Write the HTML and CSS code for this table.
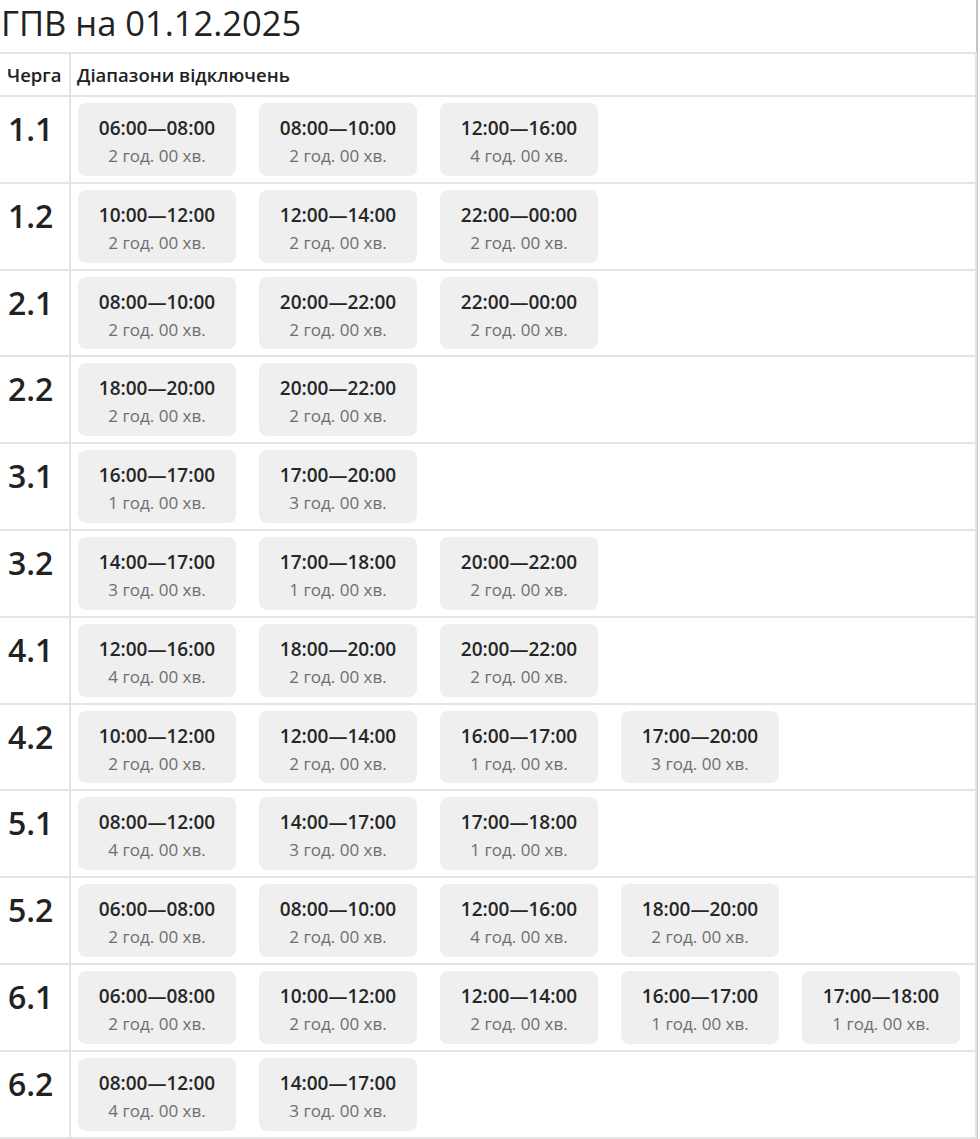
FILE: index.html
```html
<!DOCTYPE html>
<html lang="uk">
<head>
<meta charset="utf-8">
<title>ГПВ на 01.12.2025</title>
<link rel="stylesheet" href="styles.css">
</head>
<body>
<div class="page">
  <h2 class="title">ГПВ на 01.12.2025</h2>
  <table class="sched">
    <thead>
      <tr><th class="q">Черга</th><th class="r">Діапазони відключень</th></tr>
    </thead>
    <tbody>
      <tr><td class="q">1.1</td><td class="r"><div class="chips">
        <div class="chip"><div class="t">06:00—08:00</div><div class="d">2 год. 00 хв.</div></div>
        <div class="chip"><div class="t">08:00—10:00</div><div class="d">2 год. 00 хв.</div></div>
        <div class="chip"><div class="t">12:00—16:00</div><div class="d">4 год. 00 хв.</div></div>
      </div></td></tr>
      <tr><td class="q">1.2</td><td class="r"><div class="chips">
        <div class="chip"><div class="t">10:00—12:00</div><div class="d">2 год. 00 хв.</div></div>
        <div class="chip"><div class="t">12:00—14:00</div><div class="d">2 год. 00 хв.</div></div>
        <div class="chip"><div class="t">22:00—00:00</div><div class="d">2 год. 00 хв.</div></div>
      </div></td></tr>
      <tr><td class="q">2.1</td><td class="r"><div class="chips">
        <div class="chip"><div class="t">08:00—10:00</div><div class="d">2 год. 00 хв.</div></div>
        <div class="chip"><div class="t">20:00—22:00</div><div class="d">2 год. 00 хв.</div></div>
        <div class="chip"><div class="t">22:00—00:00</div><div class="d">2 год. 00 хв.</div></div>
      </div></td></tr>
      <tr><td class="q">2.2</td><td class="r"><div class="chips">
        <div class="chip"><div class="t">18:00—20:00</div><div class="d">2 год. 00 хв.</div></div>
        <div class="chip"><div class="t">20:00—22:00</div><div class="d">2 год. 00 хв.</div></div>
      </div></td></tr>
      <tr><td class="q">3.1</td><td class="r"><div class="chips">
        <div class="chip"><div class="t">16:00—17:00</div><div class="d">1 год. 00 хв.</div></div>
        <div class="chip"><div class="t">17:00—20:00</div><div class="d">3 год. 00 хв.</div></div>
      </div></td></tr>
      <tr><td class="q">3.2</td><td class="r"><div class="chips">
        <div class="chip"><div class="t">14:00—17:00</div><div class="d">3 год. 00 хв.</div></div>
        <div class="chip"><div class="t">17:00—18:00</div><div class="d">1 год. 00 хв.</div></div>
        <div class="chip"><div class="t">20:00—22:00</div><div class="d">2 год. 00 хв.</div></div>
      </div></td></tr>
      <tr><td class="q">4.1</td><td class="r"><div class="chips">
        <div class="chip"><div class="t">12:00—16:00</div><div class="d">4 год. 00 хв.</div></div>
        <div class="chip"><div class="t">18:00—20:00</div><div class="d">2 год. 00 хв.</div></div>
        <div class="chip"><div class="t">20:00—22:00</div><div class="d">2 год. 00 хв.</div></div>
      </div></td></tr>
      <tr><td class="q">4.2</td><td class="r"><div class="chips">
        <div class="chip"><div class="t">10:00—12:00</div><div class="d">2 год. 00 хв.</div></div>
        <div class="chip"><div class="t">12:00—14:00</div><div class="d">2 год. 00 хв.</div></div>
        <div class="chip"><div class="t">16:00—17:00</div><div class="d">1 год. 00 хв.</div></div>
        <div class="chip"><div class="t">17:00—20:00</div><div class="d">3 год. 00 хв.</div></div>
      </div></td></tr>
      <tr><td class="q">5.1</td><td class="r"><div class="chips">
        <div class="chip"><div class="t">08:00—12:00</div><div class="d">4 год. 00 хв.</div></div>
        <div class="chip"><div class="t">14:00—17:00</div><div class="d">3 год. 00 хв.</div></div>
        <div class="chip"><div class="t">17:00—18:00</div><div class="d">1 год. 00 хв.</div></div>
      </div></td></tr>
      <tr><td class="q">5.2</td><td class="r"><div class="chips">
        <div class="chip"><div class="t">06:00—08:00</div><div class="d">2 год. 00 хв.</div></div>
        <div class="chip"><div class="t">08:00—10:00</div><div class="d">2 год. 00 хв.</div></div>
        <div class="chip"><div class="t">12:00—16:00</div><div class="d">4 год. 00 хв.</div></div>
        <div class="chip"><div class="t">18:00—20:00</div><div class="d">2 год. 00 хв.</div></div>
      </div></td></tr>
      <tr><td class="q">6.1</td><td class="r"><div class="chips">
        <div class="chip"><div class="t">06:00—08:00</div><div class="d">2 год. 00 хв.</div></div>
        <div class="chip"><div class="t">10:00—12:00</div><div class="d">2 год. 00 хв.</div></div>
        <div class="chip"><div class="t">12:00—14:00</div><div class="d">2 год. 00 хв.</div></div>
        <div class="chip"><div class="t">16:00—17:00</div><div class="d">1 год. 00 хв.</div></div>
        <div class="chip"><div class="t">17:00—18:00</div><div class="d">1 год. 00 хв.</div></div>
      </div></td></tr>
      <tr><td class="q">6.2</td><td class="r"><div class="chips">
        <div class="chip"><div class="t">08:00—12:00</div><div class="d">4 год. 00 хв.</div></div>
        <div class="chip"><div class="t">14:00—17:00</div><div class="d">3 год. 00 хв.</div></div>
      </div></td></tr>
    </tbody>
  </table>
</div>
</body>
</html>
```
FILE: styles.css
```css
html, body {
  margin: 0;
  padding: 0;
  background: #fff;
}
body {
  font-family: "Open Sans", "Noto Sans", sans-serif;
  color: #222;
}
.page {
  width: 978px;
  border-right: 2px solid #c4c4c4;
  min-height: 1139px;
  box-sizing: border-box;
}
.title {
  margin: 0 0 7px 0;
  padding-left: 1px;
  font-size: 34.5px;
  font-weight: 400;
  line-height: 45px;
  color: #222;
}
.sched {
  width: 977px;
  border-collapse: collapse;
  border: 2px solid #e4e4e4;
  border-left: none;
}
.sched th, .sched td {
  border: 2px solid #e4e4e4;
  padding: 0;
  text-align: left;
  vertical-align: top;
}
.sched th:first-child, .sched td:first-child {
  border-left: none;
}
.sched th {
  font-size: 18.5px;
  font-weight: 600;
  height: 40px;
  vertical-align: middle;
  line-height: 24px;
  padding-top: 1px;
}
.sched th.q {
  width: 62px;
  padding-left: 7px;
}
.sched th.r {
  padding-left: 6px;
}
.sched td.q {
  font-size: 32px;
  font-weight: 600;
  line-height: 44px;
  padding: 10px 0 0 8px;
}
.sched td.r {
  padding: 6px 7px 6px 7px;
}
.chips {
  display: flex;
  flex-wrap: wrap;
  gap: 23px;
}
.chip {
  width: 158px;
  height: 72.8px;
  box-sizing: border-box;
  background: #efefef;
  border-radius: 8px;
  padding-top: 12px;
  text-align: center;
}
.chip .t {
  font-size: 19px;
  font-weight: 600;
  line-height: 26px;
  color: #262626;
}
.chip .d {
  margin-top: 2px;
  font-size: 17px;
  font-weight: 400;
  line-height: 26px;
  color: #6e6e6e;
}
```
